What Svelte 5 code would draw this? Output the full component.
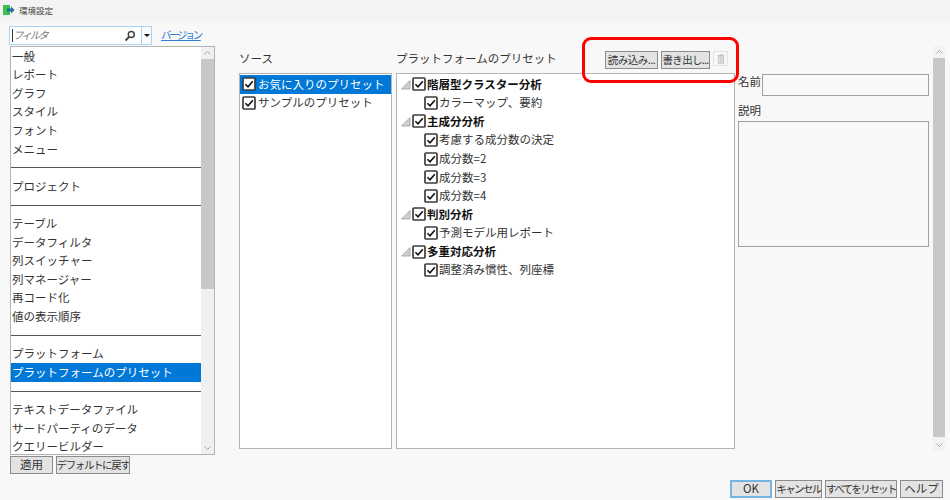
<script>
  const nav = [
    ['一般','レポート','グラフ','スタイル','フォント','メニュー'],
    ['プロジェクト'],
    ['テーブル','データフィルタ','列スイッチャー','列マネージャー','再コード化','値の表示順序'],
    ['プラットフォーム','プラットフォームのプリセット'],
    ['テキストデータファイル','サードパーティのデータ','クエリービルダー']
  ];
  const sources = ['お気に入りのプリセット','サンプルのプリセット'];
  const tree = [
    { name:'階層型クラスター分析', kids:['カラーマップ、要約'] },
    { name:'主成分分析', kids:['考慮する成分数の決定','成分数=2','成分数=3','成分数=4'] },
    { name:'判別分析', kids:['予測モデル用レポート'] },
    { name:'多重対応分析', kids:['調整済み慣性、列座標'] }
  ];
</script>

{#snippet check()}
  <svg class="cb" viewBox="0 0 14 14" width="14" height="14" aria-hidden="true">
    <rect x="1" y="1" width="12" height="12" rx="1" fill="#fff" stroke="#3c3c3c" stroke-width="1.7"/>
    <path d="M3.4 7.2 L6 9.8 L10.8 4.2" fill="none" stroke="#111" stroke-width="1.6"/>
  </svg>
{/snippet}

{#snippet scrollbar(cls)}
  <div class="sb {cls}">
    <svg class="arrow" viewBox="0 0 13 12" aria-hidden="true"><path d="M3.5 7.5 L6.5 4.5 L9.5 7.5" fill="none" stroke="#a8a8a8" stroke-width="1"/></svg>
    <div class="thumb"></div>
    <div class="rest"></div>
    <svg class="arrow" viewBox="0 0 13 12" aria-hidden="true"><path d="M3.5 4.5 L6.5 7.5 L9.5 4.5" fill="none" stroke="#a8a8a8" stroke-width="1"/></svg>
  </div>
{/snippet}

<div class="window">
  <header class="title">
    <svg viewBox="0 0 12 11" width="12" height="11" aria-hidden="true">
      <rect x="0" y="0" width="7" height="10" fill="#3fbf4f"/>
      <path d="M4 3.5 H8 V1.5 L11.5 5 L8 8.5 V6.5 H4 Z" fill="#1f6f9f"/>
    </svg>
    <span>環境設定</span>
  </header>

  <main class="main">
    <aside class="left">
      <div class="filter-row">
        <div class="filter">
          <span class="ph">フィルタ</span>
          <svg class="mag" viewBox="0 0 12 12" width="12" height="12" aria-hidden="true">
            <circle cx="7.3" cy="4.6" r="3" fill="none" stroke="#444" stroke-width="1.5"/>
            <path d="M5 7 L1.5 10.5" stroke="#444" stroke-width="2"/>
          </svg>
          <div class="drop"><i></i></div>
        </div>
        <a class="link" href="#top">バージョン</a>
      </div>
      <div class="navbox">
        <div class="navlist">
          {#each nav as group, g}
            {#if g > 0}<div class="sep"></div>{/if}
            {#each group as item}
              <div class="row" class:sel={item === 'プラットフォームのプリセット'}>{item}</div>
            {/each}
          {/each}
        </div>
        {@render scrollbar('nav-sb')}
      </div>
      <div class="left-btns">
        <button class="btn apply">適用</button>
        <button class="btn reset">デフォルトに戻す</button>
      </div>
    </aside>

    <section class="col sources">
      <div class="head">ソース</div>
      <div class="box srcbox">
        {#each sources as s, i}
          <div class="item" class:sel={i === 0}>{@render check()}<span>{s}</span></div>
        {/each}
      </div>
    </section>

    <section class="col presets">
      <div class="head preset-head">
        <span>プラットフォームのプリセット</span>
        <div class="tools">
          <button class="btn read">読み込み...</button>
          <button class="btn write">書き出し...</button>
          <div class="trash">
            <svg viewBox="0 0 14 14" width="14" height="14" aria-hidden="true">
              <path d="M4 3.5 H10 V12 H4 Z M3 3 H11 M5.5 2 H8.5 M6 6 H8 M6 8 H8 M6 10 H8" fill="#e4e4e4" stroke="#bdbdbd" stroke-width="1"/>
            </svg>
          </div>
        </div>
      </div>
      <div class="box treebox">
        {#each tree as node}
          <div class="node">
            <svg class="tri" viewBox="0 0 11 11" width="11" height="11" aria-hidden="true"><path d="M10 1.5 V10 H1.5 Z" fill="#cfcfcf" stroke="#a0a0a0" stroke-width="0.8"/></svg>
            {@render check()}<b>{node.name}</b>
          </div>
          {#each node.kids as k}
            <div class="kid">{@render check()}<span>{k}</span></div>
          {/each}
        {/each}
      </div>
    </section>

    <section class="details">
      <div class="name-row">
        <label for="pname">名前</label>
        <input id="pname" class="field" />
      </div>
      <label class="desc-label" for="pdesc">説明</label>
      <textarea id="pdesc" class="field area"></textarea>
    </section>

    {@render scrollbar('main-sb')}
  </main>

  <footer class="foot">
    <button class="btn ok">OK</button>
    <button class="btn cancel">キャンセル</button>
    <button class="btn resetall">すべてをリセット</button>
    <button class="btn help">ヘルプ</button>
  </footer>

  <div class="annot"></div>
</div>

<style>
  :global(body) { margin: 0; }
  .window {
    position: relative;
    width: 950px; height: 500px; overflow: hidden;
    background: #f8f8f8; color: #333;
    font-family: "Noto Sans CJK JP", "Noto Sans", sans-serif;
    font-size: 11.5px; line-height: 1;
    display: flex; flex-direction: column;
  }
  .title {
    height: 21px; flex: none; background: #f3f3f3;
    display: flex; align-items: center; gap: 4px; padding-left: 3px;
    font-size: 8.5px; color: #444;
  }
  .main { flex: none; height: 453px; display: flex; padding-left: 9px; }
  .left { width: 206px; flex: none; display: flex; flex-direction: column; padding-top: 5px; }
  .filter-row { display: flex; align-items: center; height: 20px; }
  .filter {
    width: 143px; height: 19px; box-sizing: border-box;
    border: 1px solid #a9d3ee; background: #fff;
    display: flex; align-items: center; padding-left: 2px;
  }
  .ph { flex: 1; color: #777; font-style: italic; border-left: 1px solid #333; padding-left: 0; font-size: 10.5px; letter-spacing: -2px; height: 13px; display: flex; align-items: center; }
  .mag { margin-right: 5px; }
  .drop { width: 9px; height: 100%; border-left: 1px solid #a9d3ee; display: flex; align-items: center; justify-content: center; background: #fbfbfb; }
  .drop i { width: 0; height: 0; border: 3px solid transparent; border-top: 3px solid #111; border-bottom: 0; }
  .link { margin-left: 9px; color: #2f80d0; font-size: 10.5px; letter-spacing: -2.5px; }
  .navbox {
    margin-left: 1px; margin-top: 1px; width: 205px; height: 409px; box-sizing: border-box;
    border: 1px solid #b4b4b4; background: #fff; display: flex;
  }
  .navlist { flex: 1; min-width: 0; overflow: hidden; }
  .row { height: 18.62px; display: flex; align-items: center; padding-left: 1px; white-space: nowrap; }
  .row.sel { background: #0078d7; color: #fff; }
  .sep { height: 18.62px; box-sizing: border-box; display: flex; align-items: center; }
  .sep::after { content: ""; flex: 1; height: 1px; background: #555; }

  .sb { width: 13px; flex: none; background: #f0f0f0; display: flex; flex-direction: column; }
  .arrow { width: 13px; height: 12px; flex: none; }
  .thumb { background: #c8c8c8; }
  .rest { flex: 1; }
  .nav-sb .thumb { height: 230px; }
  .main-sb { margin-left: 3px; margin-top: 25px; height: 405px; width: 12px; background: #f2f2f2; }
  .main-sb .thumb { height: 379px; }

  .left-btns { display: flex; gap: 3px; margin-left: 1px; margin-top: 1px; }
  .btn {
    height: 18px; box-sizing: border-box; padding: 0; margin: 0;
    border: 1px solid #8c8c8c; background: #e3e3e3; color: #333;
    font: inherit; font-size: 11.5px; white-space: nowrap; overflow: hidden;
    display: flex; align-items: center; justify-content: center;
  }
  .apply { width: 43px; }
  .reset { width: 74px; font-size: 10.5px; letter-spacing: -1.4px; }

  .col { display: flex; flex-direction: column; padding-top: 30px; flex: none; }
  .head { height: 22px; font-size: 11.5px; display: flex; align-items: flex-start; padding-top: 2px; box-sizing: border-box; }
  .sources { margin-left: 24px; width: 153px; }
  .box { border: 1px solid #b4b4b4; background: #fff; box-sizing: border-box; height: 376px; }
  .srcbox { padding-top: 1px; }
  .item { height: 18.6px; display: flex; align-items: center; gap: 2px; padding-left: 2px; white-space: nowrap; }
  .item.sel { background: #0078d7; color: #fff; }
  .presets { margin-left: 4px; width: 339px; }
  .preset-head { justify-content: space-between; padding-right: 7px; }
  .tools { display: flex; gap: 3px; margin-top: -2px; align-items: flex-start; }
  .read { width: 53px; letter-spacing: -0.5px; font-size: 10.5px; }
  .write { width: 49px; letter-spacing: -0.7px; font-size: 10.5px; }
  .trash { width: 15px; height: 15px; border: 1px solid #e2e2e2; box-sizing: border-box; display: flex; align-items: center; justify-content: center; }
  .trash svg { width: 12px; height: 12px; }
  .treebox { padding-top: 1px; }
  .node, .kid { height: 18.6px; display: flex; align-items: center; white-space: nowrap; }
  .node { padding-left: 3px; }
  .node b { font-weight: 700; color: #111; margin-left: 1px; }
  .tri { margin-right: 1px; }
  .kid { padding-left: 27px; gap: 1px; }
  .cb { flex: none; }

  .details { width: 192px; flex: none; margin-left: 3px; padding-top: 53px; display: flex; flex-direction: column; }
  .name-row { display: flex; align-items: flex-start; height: 22px; }
  .name-row label { padding-top: 2px; width: 24px; white-space: nowrap; flex: none; }
  .field { border: 1px solid #a0a0a0; background: #f8f8f8; box-sizing: border-box; margin: 0; padding: 0; display: block; resize: none; outline: none; }
  .name-row .field { width: 167px; height: 22px; }
  .desc-label { margin-top: 9px; height: 14px; display: block; }
  .area { width: 191px; height: 126px; margin-top: 2px; }

  .foot { flex: 1; display: flex; justify-content: flex-end; gap: 3px; padding-right: 7px; padding-top: 6px; }
  .ok { width: 42px; border: 2px solid #78b4e0; }
  .cancel { width: 47px; font-size: 10.5px; letter-spacing: -1.6px; }
  .resetall { width: 72px; font-size: 10.5px; letter-spacing: -1.6px; }
  .help { width: 43px; }

  .annot {
    position: absolute; left: 582px; top: 37px; width: 157px; height: 46px;
    box-sizing: border-box; border: 3px solid #f00; border-radius: 9px;
  }
</style>
